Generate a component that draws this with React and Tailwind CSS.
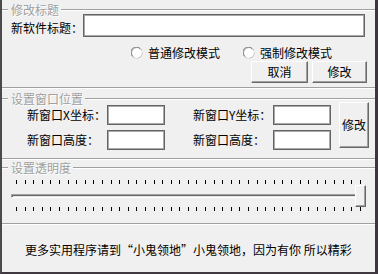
import React from "react";

function Etch({ className = "" }) {
  return <div className={"h-[2px] border-t border-b border-t-[#a0a0a0] border-b-white " + className} />;
}

function Legend({ text }) {
  return (
    <div className="flex items-center h-[16px]">
      <Etch className="w-[6px]" />
      <span className="pl-[3px] pr-[2px] leading-[16px] text-[#a0a0a0] [text-shadow:1px_1px_0_#ffffff] whitespace-nowrap">
        {text}
      </span>
      <Etch className="flex-1" />
    </div>
  );
}

function Btn({ children, className = "" }) {
  return (
    <div
      className={
        "flex items-center justify-center bg-[#f0f0f0] border border-t-white border-l-white border-r-[#696969] border-b-[#696969] shadow-[inset_-1px_-1px_0_#a0a0a0] leading-[16px] " +
        className
      }
    >
      {children}
    </div>
  );
}

function Input({ className = "" }) {
  return <div className={"bg-white border border-[#646464] shadow-[inset_0_0_0_1px_#a8a8a8] " + className} />;
}

function Radio() {
  return (
    <svg width="12" height="12" viewBox="0 0 12 12" className="shrink-0">
      <circle cx="6" cy="6" r="5.5" fill="#ffffff" stroke="#a0a0a0" strokeWidth="1" />
      <path d="M1.5 9 A5 5 0 0 1 9 1.5" fill="none" stroke="#808080" strokeWidth="1" />
      <path d="M10.5 3 A5 5 0 0 1 3 10.5" fill="none" stroke="#ffffff" strokeWidth="1" />
    </svg>
  );
}

function Ticks() {
  const ticks = Array.from({ length: 41 });
  return (
    <div className="ml-[14px] w-[345px] h-[4px] flex justify-between">
      {ticks.map((_, i) => (
        <div key={i} className="w-[1px] h-[4px] bg-black" />
      ))}
    </div>
  );
}

export default function App() {
  return (
    <div
      lang="zh-CN"
      className="w-[378px] h-[274px] bg-[#f0f0f0] border-l-2 border-l-[#4a4a4a] border-r-[3px] border-r-[#3e3540] border-b-2 border-b-[#403a40] flex flex-col text-[12px] text-black font-['Noto_Sans_CJK_SC','Liberation_Sans',sans-serif] overflow-hidden"
    >
      {/* group 1 */}
      <div className="pt-[2px]">
        <Legend text="修改标题" />
      </div>
      <div className="mt-[-4px] h-[23px] flex items-start pl-[9px]">
        <span className="mt-[6px] leading-[16px] w-[72px] whitespace-nowrap">新软件标题：</span>
        <Input className="w-[282px] h-[23px]" />
      </div>
      <div className="mt-[8px] h-[16px] flex items-center pl-[129px]">
        <Radio />
        <span className="ml-[5px] leading-[16px] whitespace-nowrap">普通修改模式</span>
        <div className="ml-[23px]">
          <Radio />
        </div>
        <span className="ml-[5px] leading-[16px] whitespace-nowrap">强制修改模式</span>
      </div>
      <div className="h-[22px] flex justify-end gap-[4px] pr-[8px]">
        <Btn className="w-[57px] h-[22px]">取消</Btn>
        <Btn className="w-[55px] h-[22px]">修改</Btn>
      </div>
      <Etch className="mt-[4px]" />

      {/* group 2 */}
      <div className="mt-[2px]">
        <Legend text="设置窗口位置" />
      </div>
      <div className="mt-[-5px] h-[48px] flex items-start pl-[25px]">
        <div className="pt-[3px] flex flex-col gap-[5px]">
          <div className="flex items-center h-[20px]">
            <span className="w-[80px] leading-[16px] whitespace-nowrap">新窗口X坐标：</span>
            <Input className="w-[58px] h-[20px]" />
            <span className="ml-[28px] w-[80px] leading-[16px] whitespace-nowrap">新窗口Y坐标：</span>
            <Input className="w-[58px] h-[20px]" />
          </div>
          <div className="flex items-center h-[20px]">
            <span className="w-[80px] leading-[16px] whitespace-nowrap">新窗口高度：</span>
            <Input className="w-[58px] h-[20px]" />
            <span className="ml-[28px] w-[80px] leading-[16px] whitespace-nowrap">新窗口高度：</span>
            <Input className="w-[58px] h-[20px]" />
          </div>
        </div>
        <Btn className="ml-[8px] w-[30px] h-[46px]">修改</Btn>
      </div>
      <Etch className="mt-[8px]" />

      {/* group 3 */}
      <Legend text="设置透明度" />
      <div className="mt-[4px]">
        <Ticks />
      </div>
      <div className="relative h-[23px]">
        <div className="mt-[10px] ml-[9px] w-[354px] h-[4px] border-t border-l border-t-[#a0a0a0] border-l-[#a0a0a0] border-b border-r border-b-white border-r-white bg-[#e3e3e3] shadow-[inset_1px_1px_0_#696969]" />
        <div className="absolute left-[353px] top-[1px] w-[11px] h-[22px] bg-[#f0f0f0] border border-t-white border-l-white border-r-[#696969] border-b-[#696969] shadow-[inset_-1px_-1px_0_#a0a0a0]" />
      </div>
      <Ticks />
      <Etch className="mt-[12px]" />

      {/* bottom info */}
      <div className="flex-1 flex items-center pl-[23px] pt-[3px]">
        <span className="leading-[16px] whitespace-nowrap">更多实用程序请到“小鬼领地”小鬼领地，因为有你 所以精彩</span>
      </div>
    </div>
  );
}
